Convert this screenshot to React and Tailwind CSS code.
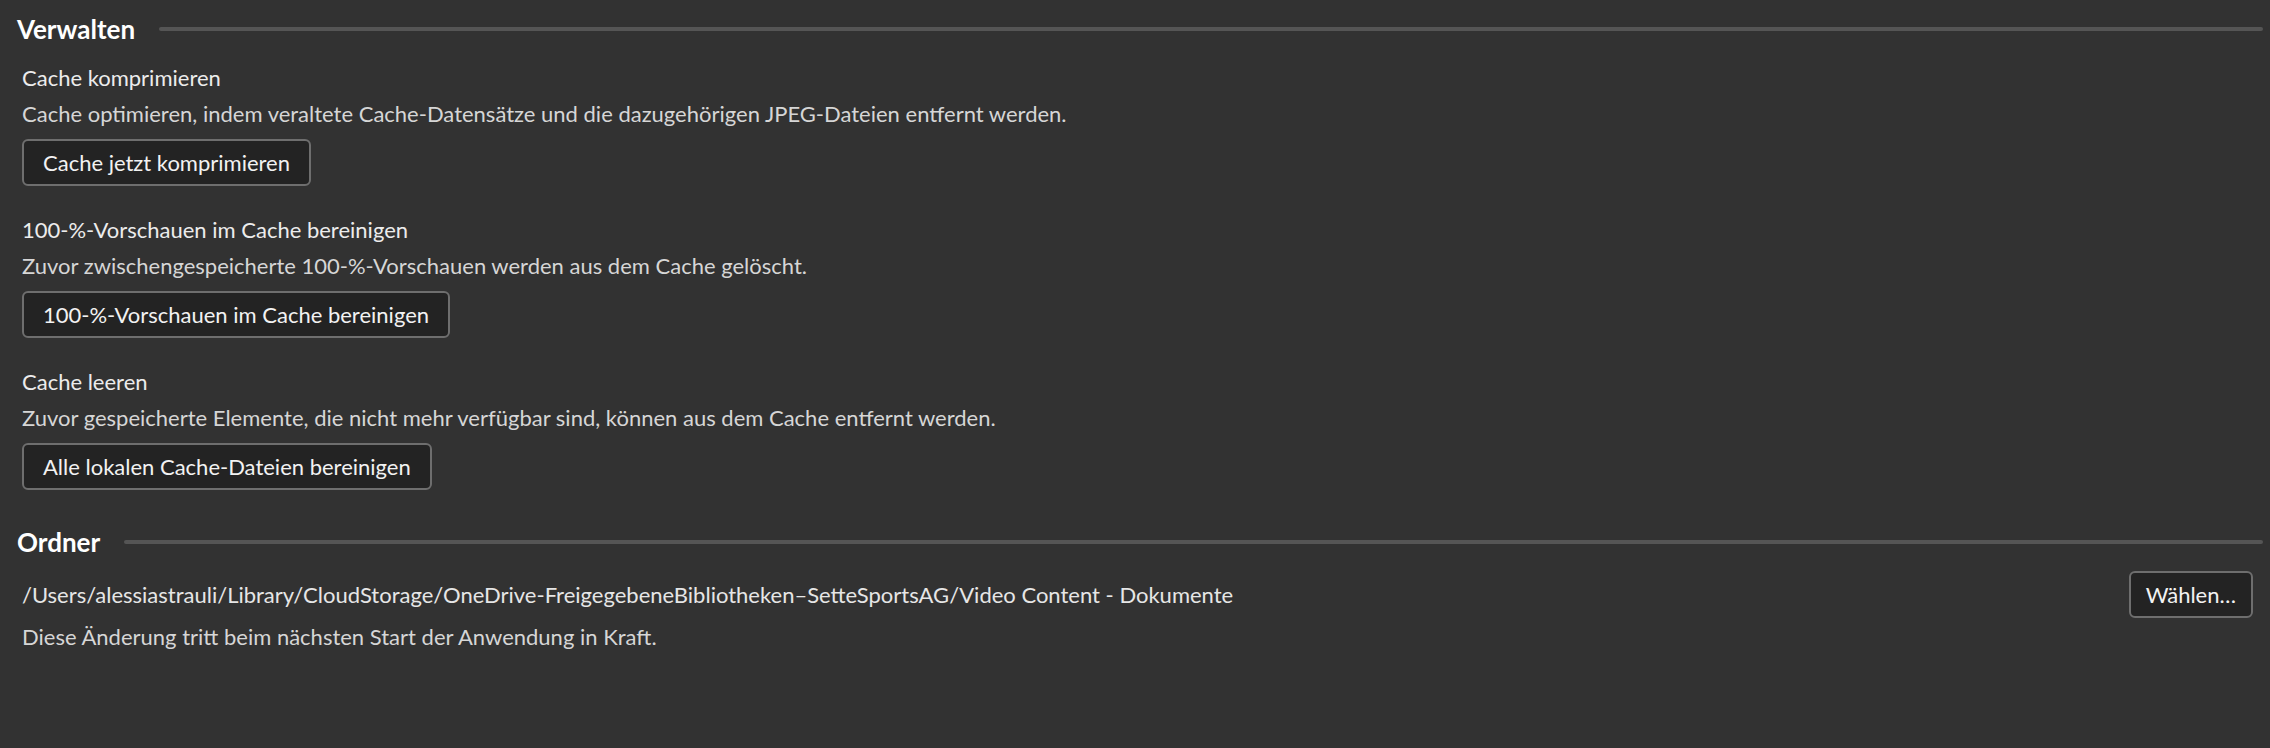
const blocks = [
  {
    title: 'Cache komprimieren',
    desc: 'Cache optimieren, indem veraltete Cache-Datensätze und die dazugehörigen JPEG-Dateien entfernt werden.',
    action: 'Cache jetzt komprimieren',
  },
  {
    title: '100-%-Vorschauen im Cache bereinigen',
    desc: 'Zuvor zwischengespeicherte 100-%-Vorschauen werden aus dem Cache gelöscht.',
    action: '100-%-Vorschauen im Cache bereinigen',
  },
  {
    title: 'Cache leeren',
    desc: 'Zuvor gespeicherte Elemente, die nicht mehr verfügbar sind, können aus dem Cache entfernt werden.',
    action: 'Alle lokalen Cache-Dateien bereinigen',
  },
];

function SectionHeader({ label }) {
  return (
    <div className="flex items-center h-[58px] pl-[17px] pr-[7px] gap-[24px]">
      <span className="text-[26px] font-bold text-white leading-none">{label}</span>
      <div className="flex-1 h-[4px] rounded-full bg-[#555555]" />
    </div>
  );
}

function ActionButton({ children, className = 'px-[19px]' }) {
  return (
    <button className={`h-[47px] rounded-[6px] border-2 border-[#6e6e6e] bg-[#232323] text-[22px] text-[#f2f2f2] leading-none ${className}`}>
      {children}
    </button>
  );
}

export default function App() {
  return (
    <div
      className="w-[2270px] h-[748px] bg-[#323232] text-[#e6e6e6] overflow-hidden"
      style={{ fontFamily: 'Lato, "Noto Sans", sans-serif' }}
    >
      <SectionHeader label="Verwalten" />

      <div className="pl-[22px] flex flex-col">
        {blocks.map((b, i) => (
          <div key={i} className={`flex flex-col items-start ${i > 0 ? 'mt-[25px]' : 'mt-[1px]'}`}>
            <div className="h-9 flex items-center text-[22px] text-[#ececec]">{b.title}</div>
            <div className="h-9 flex items-center text-[22px] text-[#d6d6d6]">{b.desc}</div>
            <div className="mt-2">
              <ActionButton>{b.action}</ActionButton>
            </div>
          </div>
        ))}
      </div>

      <div className="mt-[23px]">
        <SectionHeader label="Ordner" />
      </div>

      <div className="pl-[22px] pr-[17px]">
        <div className="flex items-center justify-between h-[47px]">
          <span className="text-[22px] text-[#e6e6e6]">
            /Users/alessiastrauli/Library/CloudStorage/OneDrive-FreigegebeneBibliotheken–SetteSportsAG/Video Content - Dokumente
          </span>
          <ActionButton className="px-[15px]">Wählen…</ActionButton>
        </div>
        <div className="h-9 flex items-center text-[22px] text-[#d6d6d6]">
          Diese Änderung tritt beim nächsten Start der Anwendung in Kraft.
        </div>
      </div>
    </div>
  );
}
